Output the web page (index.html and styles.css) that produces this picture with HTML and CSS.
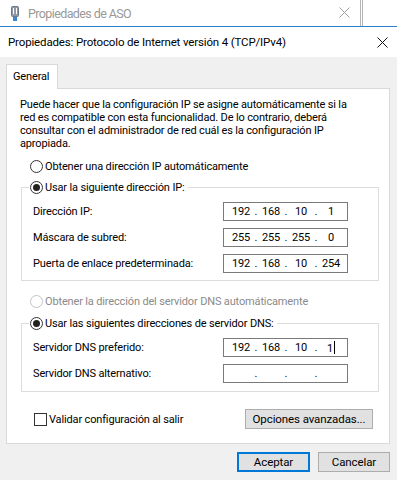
FILE: index.html
```html
<!DOCTYPE html>
<html lang="es">
<head>
    <meta charset="UTF-8">
    <title>Propiedades: Protocolo de Internet versión 4 (TCP/IPv4)</title>
    <link rel="stylesheet" href="styles.css">
</head>
<body>
    <!-- ventana de atras -->
    <div class="bg-window">
        <svg class="bg-icon" width="9" height="16" viewBox="0 0 9 16">
            <rect x="0.5" y="0.5" width="7" height="10" rx="1" fill="#8f9aa6" stroke="#6e7884"/>
            <rect x="2" y="2" width="1" height="6" fill="#fff"/>
            <rect x="5" y="2" width="1" height="6" fill="#fff"/>
            <rect x="2" y="11" width="4" height="4" fill="#3a86cf"/>
        </svg>
        <span class="bg-title">Propiedades de ASO</span>
        <svg class="bg-close" width="11" height="11" viewBox="0 0 11 11">
            <path d="M0.5 0.5 L10.5 10.5 M10.5 0.5 L0.5 10.5" stroke="#a0a0a0" stroke-width="1"/>
        </svg>
        <div class="bg-edge"></div>
    </div>

    <div class="dlg-title">
        <span>Propiedades: Protocolo de Internet versión 4 (TCP/IPv4)</span>
        <svg class="dlg-close" width="11" height="11" viewBox="0 0 11 11">
            <path d="M0.5 0.5 L10.5 10.5 M10.5 0.5 L0.5 10.5" stroke="#111" stroke-width="1"/>
        </svg>
    </div>

    <div class="dlg-body">
        <div class="tabs">
            <div class="tab">General</div>
        </div>
        <div class="panel">
            <p class="intro">
                Puede hacer que la configuración IP se asigne automáticamente si la<br>
                red es compatible con esta funcionalidad. De lo contrario, deberá<br>
                consultar con el administrador de red cuál es la configuración IP<br>
                apropiada.
            </p>

            <div class="radio row-auto"><span class="circle"></span>Obtener una dirección IP automáticamente</div>

            <fieldset class="group">
                <legend><span class="radio"><span class="circle on"></span>Usar la siguiente dirección IP:</span></legend>
                <div class="field">
                    <span class="field-label">Dirección IP:</span>
                    <div class="ip"><span class="oct">192</span><span class="dot">.</span><span class="oct">168</span><span class="dot">.</span><span class="oct">10</span><span class="dot">.</span><span class="oct">1</span></div>
                </div>
                <div class="field">
                    <span class="field-label">Máscara de subred:</span>
                    <div class="ip"><span class="oct">255</span><span class="dot">.</span><span class="oct">255</span><span class="dot">.</span><span class="oct">255</span><span class="dot">.</span><span class="oct">0</span></div>
                </div>
                <div class="field">
                    <span class="field-label">Puerta de enlace predeterminada:</span>
                    <div class="ip"><span class="oct">192</span><span class="dot">.</span><span class="oct">168</span><span class="dot">.</span><span class="oct">10</span><span class="dot">.</span><span class="oct">254</span></div>
                </div>
            </fieldset>

            <div class="radio disabled row-dns"><span class="circle"></span>Obtener la dirección del servidor DNS automáticamente</div>

            <fieldset class="group group-dns">
                <legend><span class="radio"><span class="circle on"></span>Usar las siguientes direcciones de servidor DNS:</span></legend>
                <div class="field">
                    <span class="field-label">Servidor DNS preferido:</span>
                    <div class="ip"><span class="oct">192</span><span class="dot">.</span><span class="oct">168</span><span class="dot">.</span><span class="oct">10</span><span class="dot">.</span><span class="oct">1<span class="caret"></span></span></div>
                </div>
                <div class="field">
                    <span class="field-label">Servidor DNS alternativo:</span>
                    <div class="ip"><span class="oct"></span><span class="dot">.</span><span class="oct"></span><span class="dot">.</span><span class="oct"></span><span class="dot">.</span><span class="oct"></span></div>
                </div>
            </fieldset>

            <div class="panel-foot">
                <div class="check"><span class="box"></span>Validar configuración al salir</div>
                <button class="btn btn-adv">Opciones avanzadas...</button>
            </div>
        </div>

        <div class="actions">
            <button class="btn btn-ok">Aceptar</button>
            <button class="btn">Cancelar</button>
        </div>
    </div>
</body>
</html>
```

FILE: styles.css
```css
/* dialogo de propiedades TCP/IPv4 */
body {
    margin: 0;
    width: 397px;
    height: 480px;
    overflow: hidden;
    background-color: #f0f0f0;
    font-family: Roboto, "Noto Sans", sans-serif;
    font-size: 11px;
    letter-spacing: -0.15px;
    color: #000;
}

.bg-window {
    display: flex;
    align-items: center;
    height: 26px;
    background-color: #fff;
    border-bottom: 1px solid #2a7fcb;
}

.bg-icon {
    margin-left: 11px;
    margin-top: 2px;
}

.bg-title {
    margin-left: 8px;
    font-size: 12.5px;
    letter-spacing: -0.6px;
    color: #999;
}

.bg-close {
    margin-left: auto;
    margin-top: -1px;
}

.bg-edge {
    width: 1px;
    height: 26px;
    margin-left: 10px;
    margin-right: 34px;
    border-left: 1px solid #b4b4b4;
    border-right: 1px solid #b4b4b4;
}

.dlg-title {
    display: flex;
    align-items: center;
    justify-content: space-between;
    height: 30px;
    padding: 0 9px 0 8px;
    background-color: #fff;
}

.dlg-title span {
    font-size: 11.5px;
    letter-spacing: -0.15px;
}

.dlg-body {
    padding: 7px 7px 0 6px;
}

.tabs {
    display: flex;
    position: relative;
    z-index: 1;
    margin-bottom: -1px;
}

.tab {
    height: 24px;
    line-height: 23px;
    padding: 0 7px 0 6px;
    background-color: #fff;
    border: 1px solid #d9d9d9;
    border-bottom: none;
    width: 37px;
}

.panel {
    background-color: #fff;
    border: 1px solid #d9d9d9;
    padding: 9px 10px 14px 13px;
}

.intro {
    margin: 0;
    line-height: 13px;
    white-space: nowrap;
}

.radio {
    display: flex;
    align-items: center;
    height: 16px;
    white-space: nowrap;
}

.circle {
    width: 11px;
    height: 11px;
    border: 1px solid #333;
    border-radius: 50%;
    margin-right: 2px;
    position: relative;
    background-color: #fff;
}

.circle.on::after {
    content: "";
    position: absolute;
    left: 2px;
    top: 2px;
    width: 7px;
    height: 7px;
    border-radius: 50%;
    background-color: #222;
}

.row-auto {
    margin: 8px 0 0 10px;
}

.row-dns {
    margin: 12px 0 0 10px;
}

.disabled {
    color: #8a8a8a;
}

.disabled .circle {
    border-color: #c4c4c4;
}

.group {
    margin: 5px 0 0 1px;
    padding: 7px 29px 7px 11px;
    border: 1px solid #dcdcdc;
    min-width: 0;
}

.group-dns {
    margin-top: 6px;
    padding-bottom: 8px;
}

.group legend {
    padding: 0 3px 0 1px;
    margin-left: -4px;
}

.field {
    display: flex;
    align-items: center;
    height: 19px;
    white-space: nowrap;
}

.field + .field {
    margin-top: 7px;
}

.field-label {
    width: 190px;
}

.ip {
    display: flex;
    align-items: center;
    box-sizing: border-box;
    width: 125px;
    height: 19px;
    padding-left: 5px;
    border: 1px solid #7a7a7a;
}

.oct {
    width: 24px;
    text-align: center;
}

.dot {
    width: 6px;
    text-align: center;
}

.caret {
    display: inline-block;
    width: 0;
    height: 13px;
    margin-left: 1px;
    vertical-align: -2px;
    border-left: 1px solid #000;
}

.panel-foot {
    display: flex;
    align-items: center;
    justify-content: space-between;
    margin-top: 17px;
}

.check {
    display: flex;
    align-items: center;
    margin-left: 14px;
}

.box {
    width: 11px;
    height: 11px;
    border: 1px solid #333;
    margin-right: 2px;
}

.btn {
    font-family: inherit;
    font-size: 11.5px;
    letter-spacing: -0.1px;
    color: #000;
    background-color: #e1e1e1;
    border: 1px solid #adadad;
    height: 20px;
    padding: 0;
    margin: 0;
}

.btn-adv {
    width: 128px;
    margin-right: 6px;
}

.actions {
    display: flex;
    justify-content: flex-end;
    gap: 8px;
    margin-top: 8px;
}

.actions .btn {
    width: 72px;
}

.actions .btn-ok {
    width: 73px;
    border: 2px solid #0078d7;
}
```
